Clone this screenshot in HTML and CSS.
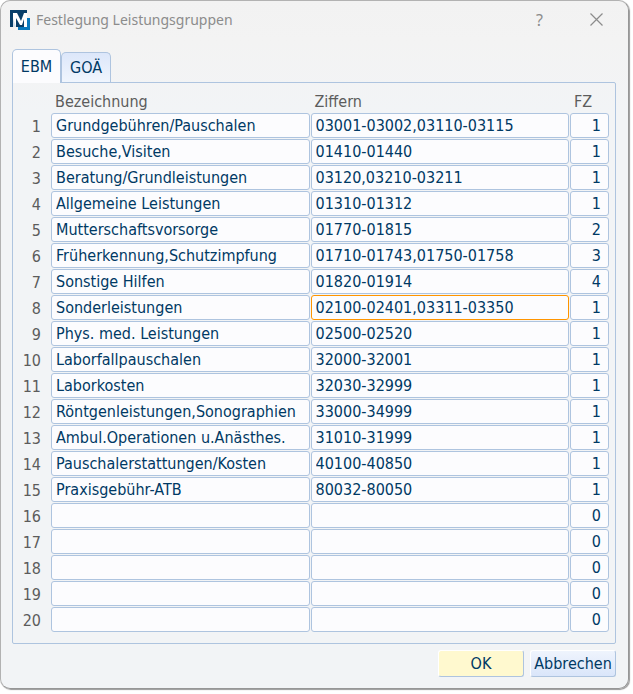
FILE: index.html
```html
<!DOCTYPE html>
<html lang="de">
<head>
<meta charset="utf-8">
<meta name="viewport" content="width=device-width, initial-scale=1">
<title>Festlegung Leistungsgruppen</title>
<link rel="stylesheet" href="styles.css">
</head>
<body>
<main class="window">
  <header class="titlebar">
    <svg class="logo" viewBox="0 0 20 20" aria-hidden="true">
      <path d="M8 8H20V20H8Z" fill="#0878bd"/>
      <path d="M0 0H17V17H0Z" fill="#073e69"/>
      <path d="M3 17V3H7L11 11L14 3H17V17H14V9L12 15H10L6 8V17Z" fill="#fff"/>
      <path d="M3 8L6 17H3Z" fill="#d7e3ed"/>
    </svg>
    <h1 class="title">Festlegung Leistungsgruppen</h1>
    <button class="caption-button" type="button" aria-label="Hilfe">?</button>
    <button class="caption-button" type="button" aria-label="Schließen">
      <svg class="close" viewBox="0 0 13 13" aria-hidden="true"><path d="M0.500 0.500L12.500 12.500M12.500 0.500L0.500 12.500" fill="none" stroke="#8c8c8c" stroke-width="1.200"/></svg>
    </button>
  </header>
  <form class="content">
    <div class="tabs" role="tablist">
      <button class="tab tab-active" type="button" role="tab" aria-selected="true">EBM</button>
      <button class="tab" type="button" role="tab" aria-selected="false">GOÄ</button>
    </div>
    <section class="panel">
      <table class="groups">
        <colgroup><col class="col-number"><col><col><col class="col-fz"></colgroup>
        <thead><tr><td></td><th id="name" scope="col">Bezeichnung</th><th id="codes" scope="col">Ziffern</th><th id="fz" scope="col">FZ</th></tr></thead>
        <tbody>
          <tr><th id="r1" scope="row">1</th><td><input aria-labelledby="r1 name" value="Grundgebühren/Pauschalen"></td><td><input aria-labelledby="r1 codes" value="03001-03002,03110-03115"></td><td><input class="number" aria-labelledby="r1 fz" value="1"></td></tr>
          <tr><th id="r2" scope="row">2</th><td><input aria-labelledby="r2 name" value="Besuche,Visiten"></td><td><input aria-labelledby="r2 codes" value="01410-01440"></td><td><input class="number" aria-labelledby="r2 fz" value="1"></td></tr>
          <tr><th id="r3" scope="row">3</th><td><input aria-labelledby="r3 name" value="Beratung/Grundleistungen"></td><td><input aria-labelledby="r3 codes" value="03120,03210-03211"></td><td><input class="number" aria-labelledby="r3 fz" value="1"></td></tr>
          <tr><th id="r4" scope="row">4</th><td><input aria-labelledby="r4 name" value="Allgemeine Leistungen"></td><td><input aria-labelledby="r4 codes" value="01310-01312"></td><td><input class="number" aria-labelledby="r4 fz" value="1"></td></tr>
          <tr><th id="r5" scope="row">5</th><td><input aria-labelledby="r5 name" value="Mutterschaftsvorsorge"></td><td><input aria-labelledby="r5 codes" value="01770-01815"></td><td><input class="number" aria-labelledby="r5 fz" value="2"></td></tr>
          <tr><th id="r6" scope="row">6</th><td><input aria-labelledby="r6 name" value="Früherkennung,Schutzimpfung"></td><td><input aria-labelledby="r6 codes" value="01710-01743,01750-01758"></td><td><input class="number" aria-labelledby="r6 fz" value="3"></td></tr>
          <tr><th id="r7" scope="row">7</th><td><input aria-labelledby="r7 name" value="Sonstige Hilfen"></td><td><input aria-labelledby="r7 codes" value="01820-01914"></td><td><input class="number" aria-labelledby="r7 fz" value="4"></td></tr>
          <tr><th id="r8" scope="row">8</th><td><input aria-labelledby="r8 name" value="Sonderleistungen"></td><td><input class="current" aria-labelledby="r8 codes" value="02100-02401,03311-03350"></td><td><input class="number" aria-labelledby="r8 fz" value="1"></td></tr>
          <tr><th id="r9" scope="row">9</th><td><input aria-labelledby="r9 name" value="Phys. med. Leistungen"></td><td><input aria-labelledby="r9 codes" value="02500-02520"></td><td><input class="number" aria-labelledby="r9 fz" value="1"></td></tr>
          <tr><th id="r10" scope="row">10</th><td><input aria-labelledby="r10 name" value="Laborfallpauschalen"></td><td><input aria-labelledby="r10 codes" value="32000-32001"></td><td><input class="number" aria-labelledby="r10 fz" value="1"></td></tr>
          <tr><th id="r11" scope="row">11</th><td><input aria-labelledby="r11 name" value="Laborkosten"></td><td><input aria-labelledby="r11 codes" value="32030-32999"></td><td><input class="number" aria-labelledby="r11 fz" value="1"></td></tr>
          <tr><th id="r12" scope="row">12</th><td><input aria-labelledby="r12 name" value="Röntgenleistungen,Sonographien"></td><td><input aria-labelledby="r12 codes" value="33000-34999"></td><td><input class="number" aria-labelledby="r12 fz" value="1"></td></tr>
          <tr><th id="r13" scope="row">13</th><td><input aria-labelledby="r13 name" value="Ambul.Operationen u.Anästhes."></td><td><input aria-labelledby="r13 codes" value="31010-31999"></td><td><input class="number" aria-labelledby="r13 fz" value="1"></td></tr>
          <tr><th id="r14" scope="row">14</th><td><input aria-labelledby="r14 name" value="Pauschalerstattungen/Kosten"></td><td><input aria-labelledby="r14 codes" value="40100-40850"></td><td><input class="number" aria-labelledby="r14 fz" value="1"></td></tr>
          <tr><th id="r15" scope="row">15</th><td><input aria-labelledby="r15 name" value="Praxisgebühr-ATB"></td><td><input aria-labelledby="r15 codes" value="80032-80050"></td><td><input class="number" aria-labelledby="r15 fz" value="1"></td></tr>
          <tr><th id="r16" scope="row">16</th><td><input aria-labelledby="r16 name"></td><td><input aria-labelledby="r16 codes"></td><td><input class="number" aria-labelledby="r16 fz" value="0"></td></tr>
          <tr><th id="r17" scope="row">17</th><td><input aria-labelledby="r17 name"></td><td><input aria-labelledby="r17 codes"></td><td><input class="number" aria-labelledby="r17 fz" value="0"></td></tr>
          <tr><th id="r18" scope="row">18</th><td><input aria-labelledby="r18 name"></td><td><input aria-labelledby="r18 codes"></td><td><input class="number" aria-labelledby="r18 fz" value="0"></td></tr>
          <tr><th id="r19" scope="row">19</th><td><input aria-labelledby="r19 name"></td><td><input aria-labelledby="r19 codes"></td><td><input class="number" aria-labelledby="r19 fz" value="0"></td></tr>
          <tr><th id="r20" scope="row">20</th><td><input aria-labelledby="r20 name"></td><td><input aria-labelledby="r20 codes"></td><td><input class="number" aria-labelledby="r20 fz" value="0"></td></tr>
        </tbody>
      </table>
    </section>
    <footer class="actions">
      <button class="action action-ok" type="button">OK</button>
      <button class="action" type="button">Abbrechen</button>
    </footer>
  </form>
</main>
</body>
</html>
```
FILE: styles.css
```css
* {
  box-sizing: border-box;
}

body {
  margin: 0;
  padding: 0 4px 4px 0;
  background: #fff;
  color: #003964;
  font: 16px/22px Tahoma, "DejaVu Sans Condensed", "Noto Sans", sans-serif;
}

button,
input {
  font: inherit;
  color: inherit;
}

.window {
  border: 1px solid #b2b2b2;
  border-right-color: #969696;
  border-bottom-color: #969696;
  border-radius: 10px;
  background: linear-gradient(#f2f2f2, #f3f3f3 40px, #f2f4f6 110px);
  box-shadow: 1px 1px 1px #999;
}

.titlebar {
  display: flex;
  align-items: center;
  height: 37px;
  padding: 0 3px 0 9px;
  font-family: "Noto Sans", sans-serif;
}

.logo {
  width: 20px;
  height: 20px;
}

.title {
  flex: 1;
  margin: 0 0 0 6px;
  color: #8c8c8c;
  font-size: 14px;
  font-weight: 400;
}

.caption-button {
  display: flex;
  align-items: center;
  justify-content: center;
  width: 57px;
  height: 36px;
  padding: 0;
  border: 0;
  background: transparent;
  color: #8c8c8c;
}

.close {
  width: 13px;
  height: 13px;
}

.content {
  padding: 11px 12px 11px 11px;
}

.tabs {
  display: flex;
  align-items: flex-end;
}

.tab {
  width: 50px;
  height: 30px;
  padding: 0;
  border: 1px solid #aec4df;
  border-bottom: 0;
  border-radius: 5px 5px 0 0;
  background: linear-gradient(#dce7fa, #f0f5fd);
}

.tab-active {
  z-index: 1;
  width: 49px;
  height: 34px;
  margin-bottom: -1px;
  background: #fcfcfe;
}

.panel {
  padding: 0 5px 10px 0;
  border: 1px solid #aec4df;
  border-radius: 0 2px 2px 2px;
}

.groups {
  width: 100%;
  border-spacing: 0;
  table-layout: fixed;
}

.groups th,
.groups td {
  padding: 0 1px 1px 0;
  font-weight: 400;
}

.col-number {
  width: 38px;
}

.col-fz {
  width: 40px;
}

.groups thead th {
  height: 30px;
  padding: 7px 0 0 4px;
  color: #5c5c5c;
  text-align: left;
}

.groups tbody th {
  padding: 2px 10px 0 0;
  color: #5c5c5c;
  text-align: right;
}

.groups input {
  display: block;
  width: 100%;
  height: 25px;
  padding: 0 4px;
  border: 1px solid #aec4df;
  border-radius: 3px;
  background: #fcfcfe;
}

.groups .number {
  padding-right: 7px;
  text-align: right;
}

.groups .current {
  border-color: #ff9500;
}

.actions {
  display: flex;
  justify-content: flex-end;
  gap: 6px;
  padding-top: 6px;
}

.action {
  width: 86px;
  height: 27px;
  padding: 0;
  border: 1px solid #fff;
  border-right-color: #aec4df;
  border-bottom-color: #aec4df;
  border-radius: 3px;
  background: linear-gradient(#eff4fd, #dae6fa);
}

.action-ok {
  background: #fff9cf;
}
```
